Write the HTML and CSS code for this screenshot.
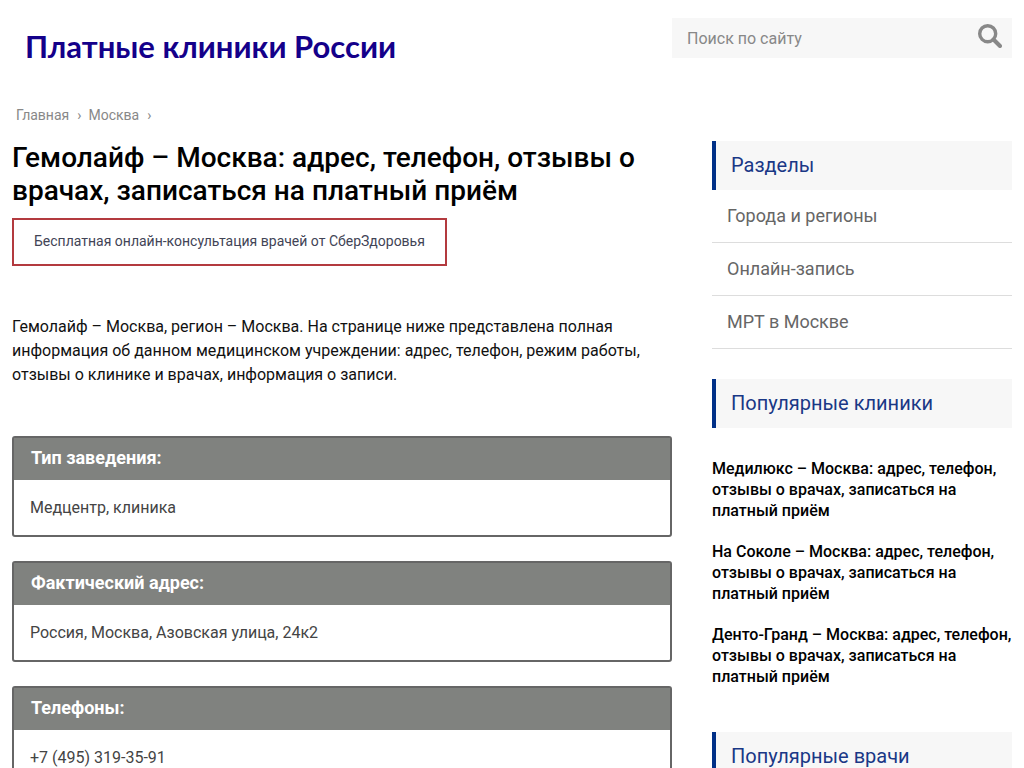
FILE: index.html
```html
<!DOCTYPE html>
<html lang="ru">
<head>
<meta charset="utf-8">
<meta name="viewport" content="width=device-width, initial-scale=1">
<title>Гемолайф – Москва</title>
<link rel="stylesheet" href="styles.css">
</head>
<body>
<div class="page">
  <header class="header">
    <a class="logo" href="#">Платные клиники России</a>
    <form class="search" role="search">
      <input class="search-input" type="text" placeholder="Поиск по сайту" aria-label="Поиск по сайту">
      <button class="search-button" type="submit" aria-label="Найти">
        <svg class="search-icon" viewBox="0 0 24 24" aria-hidden="true">
          <circle cx="9.7" cy="9.7" r="8" fill="none" stroke="currentColor" stroke-width="3.4"/>
          <path d="M15.5 15.5L22 22" fill="none" stroke="currentColor" stroke-width="4" stroke-linecap="round"/>
        </svg>
      </button>
    </form>
  </header>
  <div class="columns">
    <main class="content">
      <nav class="crumbs" aria-label="Навигация">
        <a href="#">Главная</a><span class="sep">›</span><a href="#">Москва</a><span class="sep">›</span>
      </nav>
      <h1 class="title">Гемолайф – Москва: адрес, телефон, отзывы о врачах, записаться на платный приём</h1>
      <a class="consult" href="#">Бесплатная онлайн-консультация врачей от СберЗдоровья</a>
      <p class="intro">Гемолайф – Москва, регион – Москва. На странице ниже представлена полная информация об данном медицинском учреждении: адрес, телефон, режим работы, отзывы о клинике и врачах, информация о записи.</p>
      <section class="card">
        <h2 class="card-title">Тип заведения:</h2>
        <p class="card-text">Медцентр, клиника</p>
      </section>
      <section class="card">
        <h2 class="card-title">Фактический адрес:</h2>
        <p class="card-text">Россия, Москва, Азовская улица, 24к2</p>
      </section>
      <section class="card">
        <h2 class="card-title">Телефоны:</h2>
        <p class="card-text">+7 (495) 319-35-91</p>
      </section>
    </main>
    <aside class="sidebar">
      <section class="widget">
        <h2 class="widget-title">Разделы</h2>
        <ul class="menu">
          <li><a href="#">Города и регионы</a></li>
          <li><a href="#">Онлайн-запись</a></li>
          <li><a href="#">МРТ в Москве</a></li>
        </ul>
      </section>
      <section class="widget">
        <h2 class="widget-title">Популярные клиники</h2>
        <ul class="posts">
          <li><a href="#">Медилюкс – Москва: адрес, телефон, отзывы о врачах, записаться на платный приём</a></li>
          <li><a href="#">На Соколе – Москва: адрес, телефон, отзывы о врачах, записаться на платный приём</a></li>
          <li><a href="#">Денто-Гранд – Москва: адрес, телефон, отзывы о врачах, записаться на платный приём</a></li>
        </ul>
      </section>
      <section class="widget">
        <h2 class="widget-title">Популярные врачи</h2>
      </section>
    </aside>
  </div>
</div>
</body>
</html>
```
FILE: styles.css
```css
* { box-sizing: border-box; }
body {
  margin: 0;
  background: #fff;
  color: #111;
  font: 16px/24px Roboto, "Liberation Sans", sans-serif;
}
a { color: inherit; text-decoration: none; }
h1, h2, p, ul { margin: 0; padding: 0; }
ul { list-style: none; }
.page {
  max-width: 1200px;
  margin: 0 auto;
  padding: 18px 12px 0;
}
.header {
  display: flex;
  align-items: flex-start;
  justify-content: space-between;
  padding-left: 13px;
}
.logo {
  padding-top: 6px;
  color: #14008a;
  font: 700 31px/44px Lato, "Open Sans", sans-serif;
  white-space: nowrap;
}
.search {
  display: flex;
  width: 340px;
  height: 40px;
  background: #f7f7f7;
}
.search-input {
  flex: 1;
  min-width: 0;
  padding: 2px 15px 0;
  border: 0;
  background: transparent;
  color: #888;
  font: inherit;
}
.search-input::placeholder { color: #888; opacity: 1; }
.search-button {
  padding: 0 10px 4px;
  border: 0;
  background: transparent;
  color: #888;
}
.search-icon { display: block; width: 24px; height: 24px; }
.columns {
  display: grid;
  grid-template-columns: minmax(0, 1fr) 300px;
  gap: 40px;
  padding-top: 35px;
}
.crumbs {
  padding-left: 4px;
  color: #888;
  font-size: 14px;
  line-height: 24px;
}
.sep { margin: 0 7px 0 8px; }
.title {
  margin-top: 14px;
  color: #000;
  font-size: 28px;
  font-weight: 500;
  line-height: 33px;
}
.consult {
  display: inline-block;
  margin-top: 11px;
  padding: 9px 20px 11px;
  border: 2px solid #b33a3f;
  color: #424456;
  font-size: 14px;
  line-height: 24px;
}
.intro { margin-top: 49px; }
.card {
  margin-top: 24px;
  border: 2px solid #666;
  border-radius: 3px;
  color: #444;
}
.intro + .card { margin-top: 49px; }
.card-title {
  padding: 8px 17px 10px;
  background: #80827f;
  color: #fff;
  font-size: 18px;
  font-weight: 700;
  line-height: 24px;
}
.card-text { padding: 16px 16px 15px; }
.sidebar { padding-top: 30px; }
.sidebar > .widget:first-child { padding-top: 8px; }
.widget-title {
  padding: 12px 15px 13px;
  border-left: 4px solid #003087;
  background: #f7f7f7;
  color: #1a3886;
  font-size: 20px;
  font-weight: 400;
  line-height: 24px;
}
.menu { margin-bottom: 30px; }
.menu li {
  padding: 14px 15px;
  border-bottom: 1px solid #ddd;
  color: #666;
  font-size: 18px;
  line-height: 24px;
}
.posts { padding: 30px 0 25px; }
.posts li {
  margin-bottom: 20px;
  color: #000;
  font-weight: 500;
  line-height: 21px;
}
```
